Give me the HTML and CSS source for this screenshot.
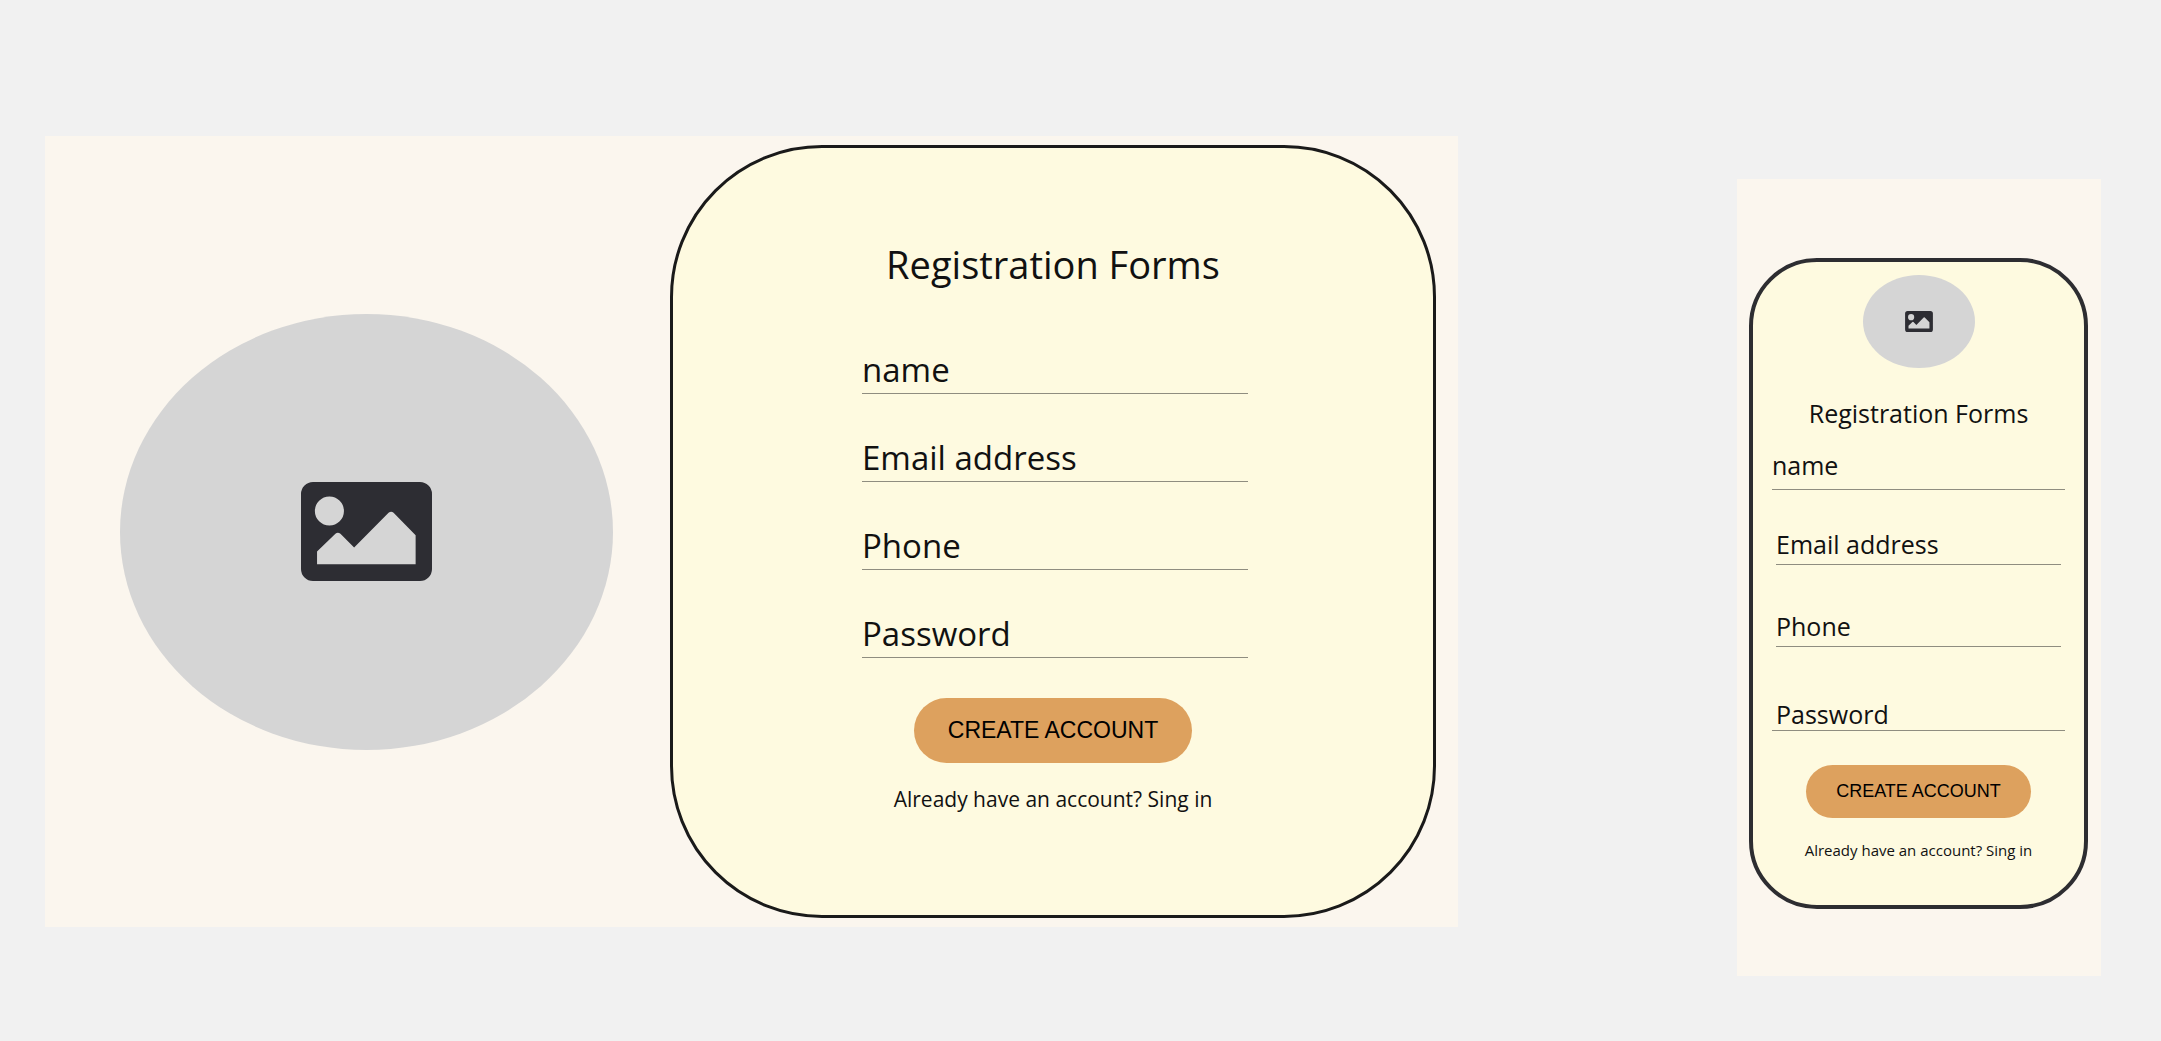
FILE: index.html
```html
<!DOCTYPE html>
<html lang="en">
<head>
  <meta charset="utf-8">
  <meta name="viewport" content="width=device-width, initial-scale=1">
  <title>Registration Forms</title>
  <link rel="stylesheet" href="styles.css">
</head>
<body>
  <svg class="sprite" aria-hidden="true">
    <symbol id="picture" viewBox="0 0 392 296">
      <path fill-rule="evenodd" d="M36 0H356A36 36 0 0 1 392 36V260A36 36 0 0 1 356 296H36A36 36 0 0 1 0 260V36A36 36 0 0 1 36 0ZM85 43A43.500 43.500 0 1 0 85 130A43.500 43.500 0 1 0 85 43ZM48 246H343V159L277 92Q270 86 262 92L159 196L118 155Q110 149 103 155L48 208Z"/>
    </symbol>
  </svg>

  <main class="boards">
    <section class="board board--wide">
      <div class="photo"><svg class="photo__icon" role="img" aria-label="Picture"><use href="#picture"/></svg></div>
      <form class="card">
        <h1 class="card__title">Registration Forms</h1>
        <div class="fields">
          <div class="field"><label for="w-name">name</label><input id="w-name" type="text"></div>
          <div class="field"><label for="w-email">Email address</label><input id="w-email" type="email"></div>
          <div class="field"><label for="w-phone">Phone</label><input id="w-phone" type="tel"></div>
          <div class="field"><label for="w-password">Password</label><input id="w-password" type="password"></div>
        </div>
        <button class="card__submit" type="submit">CREATE ACCOUNT</button>
        <a class="card__link" href="#signin">Already have an account? Sing in</a>
      </form>
    </section>

    <section class="board board--narrow">
      <form class="card">
        <div class="photo"><svg class="photo__icon" role="img" aria-label="Picture"><use href="#picture"/></svg></div>
        <h2 class="card__title">Registration Forms</h2>
        <div class="fields">
          <div class="field field--loose"><label for="n-name">name</label><input id="n-name" type="text"></div>
          <div class="field field--inset"><label for="n-email">Email address</label><input id="n-email" type="email"></div>
          <div class="field field--inset"><label for="n-phone">Phone</label><input id="n-phone" type="tel"></div>
          <div class="field"><label for="n-password">Password</label><input id="n-password" type="password"></div>
        </div>
        <button class="card__submit" type="submit">CREATE ACCOUNT</button>
        <a class="card__link" href="#signin">Already have an account? Sing in</a>
      </form>
    </section>
  </main>
</body>
</html>
```
FILE: styles.css
```css
* {
  box-sizing: border-box;
}

body {
  margin: 0;
  background: #f1f1f1;
  color: #111;
  font-family: "Open Sans", sans-serif;
}

.sprite {
  display: none;
}

.boards {
  display: grid;
  grid-template-columns: 1413fr 364fr;
  column-gap: 279px;
  align-items: start;
  padding: 136px 60px 60px 45px;
}

.board {
  background: #fbf6ee;
}

.board--wide {
  display: grid;
  grid-template-columns: 493fr 766fr;
  column-gap: 57px;
  align-items: center;
  padding: 9px 22px 9px 75px;
}

.board--narrow {
  margin-top: 43px;
  padding: 79px 13px 67px 12px;
}

/* Picture placeholder */
.photo {
  display: flex;
  align-items: center;
  justify-content: center;
  aspect-ratio: 493 / 436;
  border-radius: 50%;
  background: #d5d5d5;
}

.photo__icon {
  width: 131px;
  height: 99px;
  fill: #2d2d33;
}

/* Form card */
.card {
  display: flex;
  flex-direction: column;
  align-items: center;
  padding: 90px 20px 102px;
  border: 3px solid #1a1a1a;
  border-radius: 152px;
  background: #fefae0;
}

.card__title {
  margin: 0 0 56px;
  font-size: 38px;
  font-weight: 400;
  line-height: 52px;
}

.fields {
  display: grid;
  row-gap: 40px;
  width: 100%;
  max-width: 390px;
  padding-left: 4px;
}

/* The label rests on the input, just above its underline */
.field {
  display: grid;
}

.field label,
.field input {
  grid-area: 1 / 1;
}

.field label {
  font-size: 33px;
  line-height: 48px;
  pointer-events: none;
  z-index: 1;
}

.field input {
  width: 100%;
  min-width: 0;
  padding: 0;
  border: 0;
  border-bottom: 1px solid #8f8d80;
  background: transparent;
  font: inherit;
}

.card__submit {
  margin-top: 40px;
  padding: 0 34px;
  height: 65px;
  border: 0;
  border-radius: 33px;
  background: #dda15e;
  color: #000;
  font: 23px "Liberation Sans", Arial, sans-serif;
}

.card__link {
  margin-top: 22px;
  color: inherit;
  font-size: 21px;
  line-height: 28px;
  text-decoration: none;
}

/* Small-screen version of the card */
.board--narrow .card {
  padding: 13px 19px 45px;
  border: 4px solid #2d2d31;
  border-radius: 68px;
}

.board--narrow .photo {
  width: 112px;
  height: 93px;
  aspect-ratio: auto;
}

.board--narrow .photo__icon {
  width: 28px;
  height: 21px;
}

.board--narrow .card__title {
  margin: 28px 0 0;
  font-size: 25px;
  line-height: 34px;
}

.board--narrow .fields {
  grid-template-rows: 60px 75px 82px 84px;
  row-gap: 0;
  align-items: end;
  max-width: none;
  padding-left: 0;
}

.board--narrow .field label {
  padding-left: 4px;
  font-size: 25px;
  line-height: 34px;
}

.board--narrow .field--loose label {
  padding-left: 0;
  padding-bottom: 8px;
}

.board--narrow .field--inset label {
  padding-bottom: 4px;
}

.board--narrow .field--inset input {
  width: calc(100% - 8px);
  justify-self: center;
}

.board--narrow .card__submit {
  margin-top: 34px;
  padding: 0 30px;
  height: 53px;
  font-size: 18px;
}

.board--narrow .card__link {
  margin-top: 22px;
  font-size: 15px;
  line-height: 20px;
}
```
